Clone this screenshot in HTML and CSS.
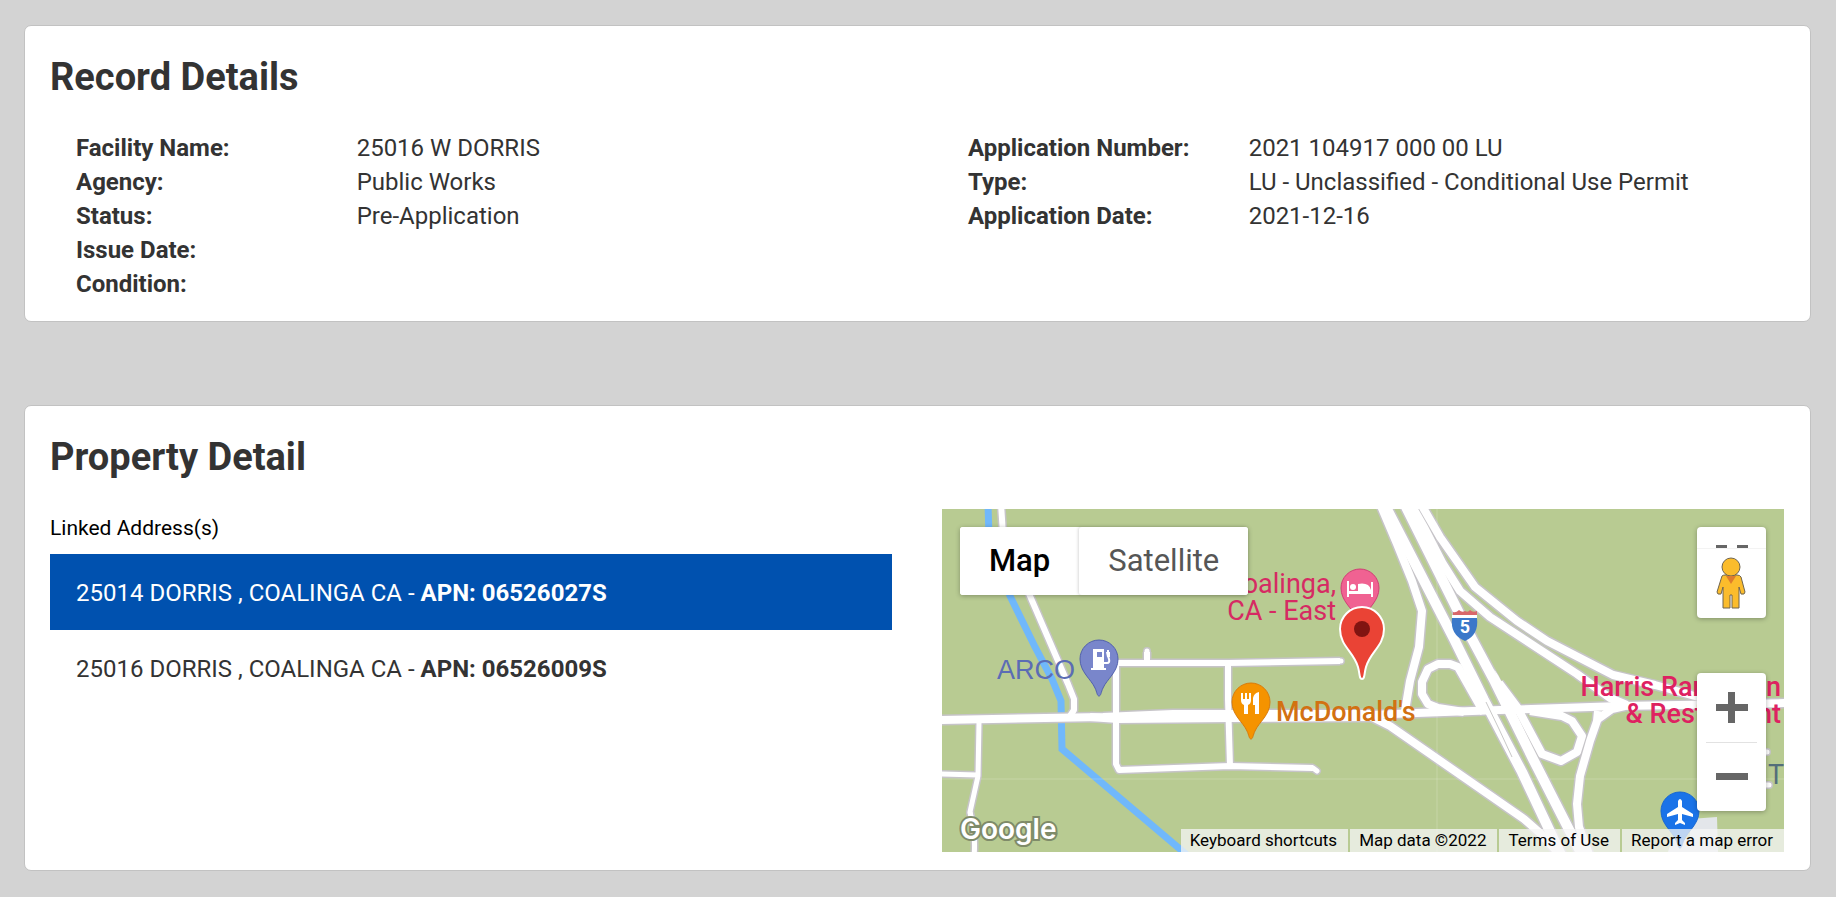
FILE: index.html
```html
<!DOCTYPE html>
<html lang="en">
<head>
<meta charset="utf-8">
<title>Record Details</title>
<link rel="stylesheet" href="styles.css">
</head>
<body>
<main class="page">
  <section class="card">
    <h1 class="card-title">Record Details</h1>
    <div class="columns">
      <dl class="details">
        <div class="detail"><dt>Facility Name:</dt><dd>25016 W DORRIS</dd></div>
        <div class="detail"><dt>Agency:</dt><dd>Public Works</dd></div>
        <div class="detail"><dt>Status:</dt><dd>Pre-Application</dd></div>
        <div class="detail"><dt>Issue Date:</dt><dd></dd></div>
        <div class="detail"><dt>Condition:</dt><dd></dd></div>
      </dl>
      <dl class="details">
        <div class="detail"><dt>Application Number:</dt><dd>2021 104917 000 00 LU</dd></div>
        <div class="detail"><dt>Type:</dt><dd>LU - Unclassified - Conditional Use Permit</dd></div>
        <div class="detail"><dt>Application Date:</dt><dd>2021-12-16</dd></div>
      </dl>
    </div>
  </section>

  <section class="card">
    <h1 class="card-title">Property Detail</h1>
    <div class="columns">
      <div class="addresses">
        <p class="addresses-label">Linked Address(s)</p>
        <button class="address address-active" type="button">25014 DORRIS , COALINGA CA - <b>APN: 06526027S</b></button>
        <button class="address" type="button">25016 DORRIS , COALINGA CA - <b>APN: 06526009S</b></button>
      </div>

      <div class="map">
        <svg class="map-canvas" viewBox="942 510 842 343" preserveAspectRatio="xMidYMid slice" role="img" aria-label="Street map">
          <defs>
            <path id="pin" d="M0 37 C-2 37 -2 33 -4 29 C-8 20 -19 13 -19 0 A19 19 0 0 1 19 0 C19 13 8 20 4 29 C2 33 2 37 0 37Z"/>
            <g id="roads" fill="none" stroke-linejoin="round">
              <g stroke-linecap="butt">
                <path class="w6" d="M1001 505 L1003 535 L1030 597 L1068 685 L1074 700 V711 L1070 717"/>
                <path class="w7" d="M938 721 L1103 718 L1173 715 L1370 715"/>
                <path class="w7" d="M1090 718 L1118 720 L1230 719 L1372 718"/>
                <path class="w7" d="M1370 716 L1417 714 L1500 711 L1620 707 L1790 704"/>
                <path class="w4" d="M979 723 L978 777 L970 813 L974 830 M938 775 L977 776"/>
                <path class="w4" d="M970 813 C972 825 976 835 974 858"/>
                <path class="w5" d="M1116 663 V765 L1119 771 L1230 767 L1313 769"/>
                <path class="w5" d="M1228 664 V700 L1230 767"/>
                <path class="w5" d="M1116 664 L1228 664 L1340 662 M1147 664 V653"/>
                <path class="w7" d="M1370 717 L1390 727 L1524 820 L1540 834 L1562 858"/>
                <path class="w7" d="M1378 500 L1397 545 L1412 582 L1422 612 L1419 648 L1410 682 L1405 712"/>
                <path class="w10" d="M1382 500 L1388 512 L1454 640 L1484 701 L1522 773 L1562 858"/>
                <path class="w10" d="M1402 500 L1408 512 L1472 640 L1495 683 L1533 760 L1560 813 L1583 858"/>
                <path class="w7" d="M1484 714 L1458 668 L1450 665 H1438 L1428 670 L1422 683 V695 L1428 705 L1438 709 L1464 713"/>
                <path class="w7" d="M1499 684 L1517 708 L1542 755 L1561 762 L1577 753 L1582 737 L1572 722 L1562 717 L1530 712"/>
                <path class="w7" d="M1598 712 L1597 722 L1590 742 L1580 777 L1577 805 L1579 828 L1590 858 M1625 707 L1612 710 L1598 720"/>
                <path class="w7" d="M1418 500 L1440 538 L1475 588 L1517 622 L1547 642 L1613 676 L1655 686 L1720 704"/>
                <path class="w7" d="M1408 500 L1425 530 L1443 565 L1460 592 L1490 618 L1577 675 L1610 699 L1627 706"/>
              </g>
              <path class="w4" stroke-linecap="round" d="M1313 769 L1317 772 M1340 662 H1341 M1147 653 V652 M1755 753 H1767 M1755 786 H1769"/>
            </g>
          </defs>
          <rect class="land" x="942" y="510" width="842" height="343"/>
          <path class="airport-area" d="M1690 820 L1717 818 L1718 853 H1668 L1672 840 H1690Z"/>
          <path class="river" d="M988 505 L989 537 L1010 597 L1035 648 L1052 680 L1061 702 L1062 750 L1187 856"/>
          <use href="#roads" class="casing"/>
          <use href="#roads" class="fill"/>
          <path class="ramp" d="M1494 670 L1498 676 L1512 702 L1503 694Z"/>
          <path class="median" d="M1486 703 L1499 730 L1512 758"/>
          <path class="tile-edge" d="M1437 510 V853 M942 780 H1784"/>

          <g class="label label-pink">
            <text x="1336" y="594" text-anchor="end">Coalinga,</text>
            <text x="1336" y="621" text-anchor="end">CA - East</text>
          </g>
          <text class="label label-blue" x="997" y="680">ARCO</text>
          <text class="label label-orange" x="1276" y="722">McDonald's</text>
          <g class="label label-red">
            <text x="1781" y="697" text-anchor="end">Harris Ranch Inn</text>
            <text x="1781" y="724" text-anchor="end">&amp; Restaurant</text>
          </g>
          <text class="label label-slate" x="1768" y="785">T</text>

          <g transform="translate(1452 611)">
            <path fill="#d9686a" d="M1 6 V2 Q4 3 7 0 Q10 3 13 1 Q16 3 18 0 Q21 3 25 1 V6Z"/>
            <path fill="#fff" d="M0 5 H25 V8 H0Z"/>
            <path fill="#3b78c9" d="M0 8 H25 Q27 25 13 31 Q-2 25 0 8Z"/>
            <text class="shield" x="13" y="23" text-anchor="middle">5</text>
          </g>

          <g transform="translate(1099 660)">
            <use href="#pin" fill="#7986cb" stroke="#5160ad"/>
            <path fill="#fff" d="M-8 11 V9 H-6 V-10 H5 V9 H7 V11Z"/>
            <path fill="#7986cb" d="M-2 -7 H3 V-2 H-2Z"/>
            <path fill="none" stroke="#fff" stroke-width="2" d="M5 4 H8 Q11 4 10 0 L9 -3 V-9"/>
            <path fill="#fff" d="M7 -7 H11 V-2 H8Z"/>
          </g>
          <g transform="translate(1360 589)">
            <use href="#pin" fill="#f06292" stroke="#cf3f74"/>
            <path fill="#fff" d="M-13 -7 H-11 V3 H-2 V-4 Q9 -6 11 2 V-6 H13 V9 H11 V6 H-11 V9 H-13Z"/>
            <circle cx="-7" cy="-1" r="3" fill="#fff"/>
          </g>
          <g transform="translate(1251 703)">
            <use href="#pin" fill="#f59300" stroke="#d87b0c"/>
            <path fill="#fff" d="M-10 -9 H-8 V-3 H-6 V-9 H-4 V-3 H-2 V-9 H0 V-2 Q0 2 -3 3 V12 H-7 V3 Q-10 2 -10 -2Z M8 -10 V12 H4 V3 H2 V-4 Q3 -9 8 -10Z"/>
          </g>
          <g transform="translate(1680 812)">
            <use href="#pin" fill="#1a73e8" stroke="#1767d2"/>
            <path fill="#fff" d="M-2 -10 Q0 -14 2 -10 V-4 L13 3 V6 L2 3 V9 L5 12 V14 L0 12 L-5 14 V12 L-2 9 V3 L-13 6 V3 L-2 -4Z"/>
          </g>
          <g transform="translate(1362 630)">
            <path fill="#ea4335" stroke="#fff" stroke-width="2" d="M0 50 C-3 50 -2 45 -4 38 C-8 23 -22 17 -22 0 A22 22 0 0 1 22 0 C22 17 8 23 4 38 C2 45 3 50 0 50Z"/>
            <circle r="8" fill="#811411"/>
          </g>
        </svg>

        <div class="map-types">
          <button class="map-type map-type-active" type="button">Map</button>
          <button class="map-type" type="button">Satellite</button>
        </div>

        <div class="map-tools">
          <div class="tool-stack">
            <button class="tool tool-fullscreen" type="button" aria-label="Toggle fullscreen view">
              <svg viewBox="0 0 69 21" width="69" height="21" aria-hidden="true"><path fill="#666" d="M19 18 H30 V21 H19Z M40 18 H51 V21 H40Z"/></svg>
            </button>
            <button class="tool tool-pegman" type="button" aria-label="Drag Pegman onto the map">
              <svg viewBox="0 0 69 69" width="69" height="69" aria-hidden="true">
                <g fill="#fbbc2c" stroke="#6f6550" stroke-width="1">
                  <path d="M25 27 Q26 26 28 26 H40 Q43 26 44 28 L48 43 Q48 46 44 45 L42 38 V59 H35 V46 H33 V59 H26 V38 L24 45 Q20 46 20 43Z"/>
                  <circle cx="34" cy="18" r="9"/>
                </g>
                <path fill="#de7c2c" d="M29 27 H39 L34 35Z"/>
              </svg>
            </button>
          </div>
          <div class="tool-stack">
            <button class="tool tool-zoom" type="button" aria-label="Zoom in">
              <svg viewBox="0 0 32 32" width="32" height="32" aria-hidden="true"><path fill="#666" d="M12 0 H19 V12 H32 V19 H19 V31 H12 V19 H0 V12 H12Z"/></svg>
            </button>
            <button class="tool tool-zoom" type="button" aria-label="Zoom out">
              <svg viewBox="0 0 32 32" width="32" height="32" aria-hidden="true"><path fill="#666" d="M0 12 H32 V19 H0Z"/></svg>
            </button>
          </div>
        </div>

        <a class="map-logo" href="#">Google</a>
        <div class="map-footer">
          <button class="map-note" type="button">Keyboard shortcuts</button>
          <span class="map-note">Map data ©2022</span>
          <a class="map-note" href="#">Terms of Use</a>
          <a class="map-note" href="#">Report a map error</a>
        </div>
      </div>
    </div>
  </section>
</main>
</body>
</html>
```
FILE: styles.css
```css
* {
  box-sizing: border-box;
}

body {
  margin: 0;
  background: #d3d3d3;
  color: #333;
  font: 24px/34px Roboto, "Liberation Sans", sans-serif;
}

button {
  border: 0;
  font: inherit;
  color: inherit;
  cursor: pointer;
}

.page {
  display: flex;
  flex-direction: column;
  gap: 83px;
  padding: 25px 25px 25px 24px;
}

.card {
  padding: 29px 26px 18px 25px;
  border: 1px solid #c2c2c2;
  border-radius: 7px;
  background: #fff;
}

.card-title {
  margin: 0 0 30px;
  font-size: 38px;
  font-weight: 700;
  line-height: 44px;
}

.columns {
  display: grid;
  grid-template-columns: 1fr 1fr;
  gap: 50px;
}

.details {
  margin: 0;
  padding: 2px 0;
}

.detail {
  display: grid;
  grid-template-columns: 1fr 2fr;
  min-height: 34px;
}

.detail dt,
.detail dd {
  margin: 0;
  padding-left: 26px;
}

.detail dt {
  font-weight: 700;
  white-space: nowrap;
}

.addresses {
  display: flex;
  flex-direction: column;
}

.addresses-label {
  margin: 0 0 7px;
  color: #000;
  font-size: 21px;
  line-height: 38px;
}

.address {
  padding: 22px 26px 20px;
  background: #fff;
  text-align: left;
}

.address-active {
  background: #0051af;
  color: #fff;
}

/* Map panel */

.map {
  position: relative;
  min-height: 343px;
  overflow: hidden;
}

.map-canvas {
  position: absolute;
  inset: 0;
  width: 100%;
  height: 100%;
}

.land { fill: #b8cb92; }
.airport-area { fill: #e3e6ea; }
.river { fill: none; stroke: #70b8fb; stroke-width: 7px; }
.ramp { fill: #fff; }
.median { fill: none; stroke: #c9c8c8; stroke-width: 1px; }
.tile-edge { stroke: #fff; stroke-opacity: 0.2; }

.fill { stroke: #fff; --edge: 0px; }
.casing { stroke: #c6c4c8; --edge: 3px; }
.w4 { stroke-width: calc(5px + var(--edge)); }
.w5 { stroke-width: calc(6px + var(--edge)); }
.w6 { stroke-width: calc(6px + var(--edge)); }
.w7 { stroke-width: calc(8px + var(--edge)); }
.w10 { stroke-width: calc(10px + var(--edge)); }

.label { font-size: 27px; }
.label-pink { fill: #d62a63; }
.label-blue { fill: #5b6cb5; font-family: "Liberation Sans", sans-serif; }
.label-orange { fill: #d27112; font-weight: 500; }
.label-red { fill: #de2161; font-weight: 500; }
.label-slate { fill: #546e7a; }
.shield { fill: #fff; font-size: 18px; font-weight: 700; }

.map-types {
  position: absolute;
  top: 18px;
  left: 18px;
  display: flex;
  border-radius: 3px;
  background: #fff;
  box-shadow: 0 1px 5px rgba(0, 0, 0, 0.3);
}

.map-type {
  padding: 17px 29px;
  border-radius: 3px;
  background: #fff;
  color: #565656;
  font-size: 31px;
}

.map-type + .map-type {
  box-shadow: -1px 0 3px rgba(0, 0, 0, 0.15);
}

.map-type-active {
  color: #000;
  font-weight: 500;
}

.map-tools {
  position: absolute;
  top: 18px;
  right: 18px;
  bottom: 41px;
  display: flex;
  flex-direction: column;
  justify-content: space-between;
}

.tool-stack {
  width: 69px;
  border-radius: 4px;
  background: #fff;
  box-shadow: 0 1px 5px rgba(0, 0, 0, 0.3);
}

.tool {
  display: flex;
  align-items: center;
  justify-content: center;
  width: 100%;
  padding: 0;
  background: none;
}

.tool-pegman {
  border-top: 1px solid #f3f3f3;
}

.tool-zoom {
  height: 69px;
}

.tool-zoom + .tool-zoom {
  width: 51px;
  margin: 0 auto;
  border-top: 1px solid #e2e2e2;
}

.map-logo {
  position: absolute;
  bottom: 6px;
  left: 18px;
  color: #fff;
  font: 600 28px/34px Inter, sans-serif;
  text-decoration: none;
  -webkit-text-stroke: 4px #7f8b69;
  paint-order: stroke fill;
}

.map-footer {
  position: absolute;
  right: 0;
  bottom: 0;
  display: flex;
  gap: 2px;
}

.map-note {
  padding: 0 11px 0 9px;
  background: rgba(245, 245, 245, 0.75);
  color: #000;
  font-size: 17px;
  line-height: 23px;
  text-decoration: none;
}
```
